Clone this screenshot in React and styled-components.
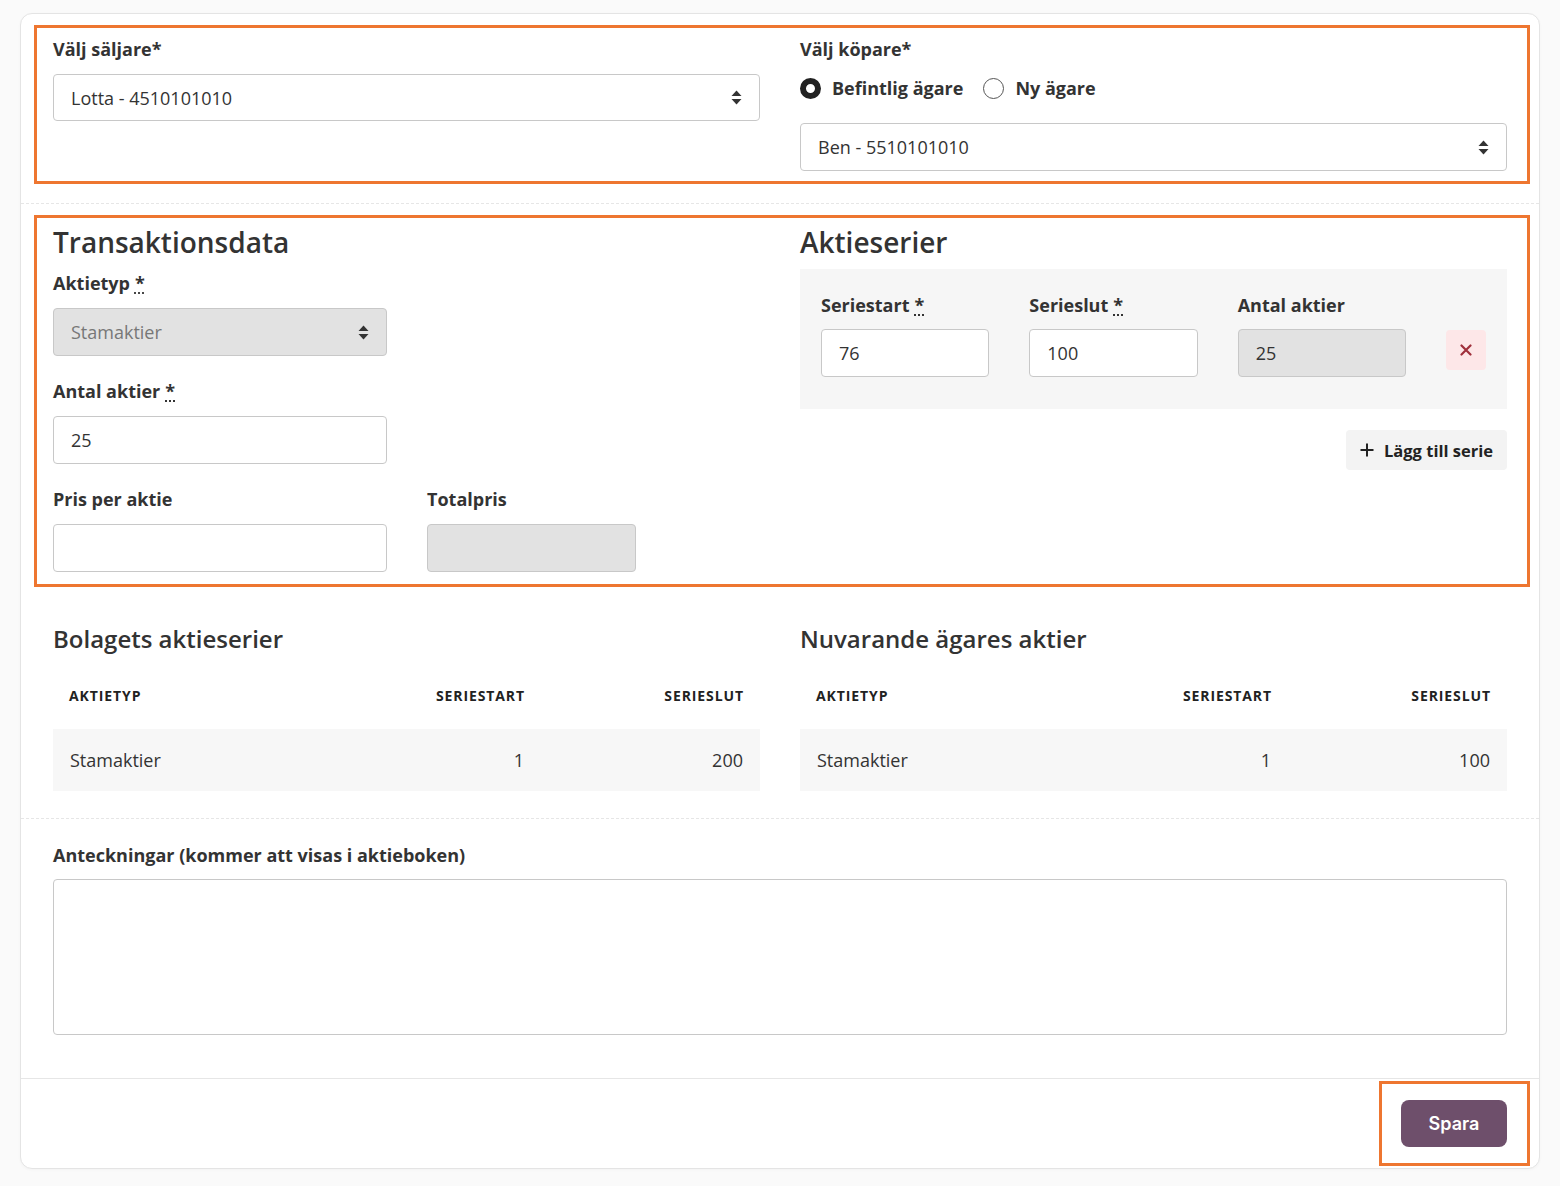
/*eslint-disable*/
import React from 'react';
import styled, { createGlobalStyle } from 'styled-components';

const GlobalStyle = createGlobalStyle`
  html, body {
    margin: 0;
    padding: 0;
    background: #fafafa;
  }
  body {
    font-family: "Open Sans", Lato, "Noto Sans", sans-serif;
    color: #333;
  }
  * { box-sizing: border-box; }
`

const Page = styled.div`
  padding: 13px 20px 16px 20px;
`

const Card = styled.div`
  background: #fff;
  border: 1px solid #e4e4e4;
  border-radius: 12px;
  box-shadow: 0 1px 3px rgba(0, 0, 0, 0.03);
  overflow: hidden;
`

// orange annotation frame
const Highlight = styled.div`
  border: 3px solid #ee7630;
  margin: ${p => p.$margin || '0 9px 0 13px'};
  padding: ${p => p.$padding || '8px 20px 10px 16px'};
`

const TwoCols = styled.div`
  display: grid;
  grid-template-columns: 1fr 1fr;
  column-gap: 40px;
  align-items: start;
`

const Divider = styled.hr`
  border: 0;
  border-top: 1px dashed #e6e6e6;
  margin: ${p => p.$margin || '0'};
`

const Label = styled.div`
  font-size: 18px;
  font-weight: 700;
  line-height: 27px;
  color: #333;
`

const Req = styled.abbr`
  text-decoration: underline dotted;
  text-underline-offset: 3px;
  margin-left: 5px;
`

const Field = styled.div`
  display: flex;
  flex-direction: column;
  gap: ${p => p.$gap || '11px'};
`

const SelectBox = styled.div`
  height: ${p => p.$h || 48}px;
  border: 1px solid #c8c8c8;
  border-radius: 4px;
  background: ${p => (p.$disabled ? '#e2e2e2' : '#fff')};
  color: ${p => (p.$disabled ? '#777' : '#333')};
  font-size: 18px;
  display: flex;
  align-items: center;
  justify-content: space-between;
  padding: 0 17px;
`

const Input = styled.div`
  height: 48px;
  border: 1px solid #c8c8c8;
  border-radius: 4px;
  background: ${p => (p.$disabled ? '#e2e2e2' : '#fff')};
  font-size: 18px;
  color: #333;
  display: flex;
  align-items: center;
  padding: 0 17px;
`

const RadioRow = styled.div`
  display: flex;
  align-items: center;
  gap: 20px;
  height: 26px;
  margin: 12px 0 22px;
`

const RadioItem = styled.label`
  display: flex;
  align-items: center;
  gap: 11px;
  font-size: 18px;
  font-weight: 700;
`

const RadioDot = styled.span`
  width: 21px;
  height: 21px;
  border-radius: 50%;
  border: ${p => (p.$checked ? '6px solid #222' : '1.5px solid #555')};
  background: #fff;
`

const Heading = styled.h2`
  margin: 0;
  font-size: 28px;
  font-weight: 600;
  line-height: 34px;
  color: #333;
`

const SubHeading = styled.h3`
  margin: 0;
  font-size: 24px;
  font-weight: 600;
  line-height: 29px;
  color: #333;
`

const LeftStack = styled.div`
  display: flex;
  flex-direction: column;
  gap: 22px;
  & > h2 { margin-bottom: -11px; }
`

const PriceRow = styled.div`
  display: grid;
  grid-template-columns: 334px 209px;
  column-gap: 40px;
`

const NarrowField = styled(Field)`
  width: 334px;
`

const SeriesBox = styled.div`
  margin-top: 10px;
  background: #f6f6f6;
  padding: 23px 21px 32px;
  display: grid;
  grid-template-columns: 1fr 1fr 1fr 40px;
  column-gap: 40px;
  align-items: end;
`

const DeleteButton = styled.button`
  width: 40px;
  height: 40px;
  border: 0;
  border-radius: 4px;
  background: #fde7e8;
  display: flex;
  align-items: center;
  justify-content: center;
  margin-bottom: 7px;
  padding: 0;
`

const Actions = styled.div`
  display: flex;
  justify-content: flex-end;
  margin-top: 21px;
`

const GhostButton = styled.button`
  height: 40px;
  border: 0;
  border-radius: 4px;
  background: #f3f3f3;
  font-family: inherit;
  font-size: 16.5px;
  font-weight: 700;
  color: #222;
  display: flex;
  align-items: center;
  gap: 10px;
  padding: 0 14px;
`

const TablesSection = styled.div`
  padding: 37px 32px 27px;
`

const Table = styled.table`
  width: 100%;
  border-collapse: collapse;
  margin-top: 19px;
  th {
    font-size: 14px;
    font-weight: 700;
    letter-spacing: 0.9px;
    text-transform: uppercase;
    color: #222;
    line-height: 18px;
    padding: 15px 16px 24px;
  }
  td {
    background: #f7f7f7;
    height: 62px;
    font-size: 18px;
    padding: 0 17px;
    color: #333;
  }
  th:first-child, td:first-child { text-align: left; }
  th:not(:first-child), td:not(:first-child) { text-align: right; }
`

const NotesSection = styled.div`
  padding: 23px 32px 43px;
`

const TextArea = styled.textarea`
  display: block;
  width: 100%;
  height: 156px;
  border: 1px solid #c8c8c8;
  border-radius: 4px;
  resize: none;
  font-family: inherit;
  font-size: 18px;
`

const Footer = styled.div`
  border-top: 1px solid #e6e6e6;
  padding: 2px 9px 2px 0;
  display: flex;
  justify-content: flex-end;
`

const SaveButton = styled.button`
  width: 106px;
  height: 47px;
  border: 0;
  border-radius: 8px;
  background: #6e4f6b;
  color: #fff;
  font-family: Inter, "Open Sans", sans-serif;
  font-size: 18px;
  font-weight: 600;
`

function SortIcon() {
  return (
    <svg width="11" height="15" viewBox="0 0 11 15">
      <path d="M5.5 0.5 L10.5 6 H0.5 Z" fill="#333" />
      <path d="M5.5 14.5 L10.5 9 H0.5 Z" fill="#333" />
    </svg>
  );
}

function CloseIcon() {
  return (
    <svg width="12" height="12" viewBox="0 0 12 12">
      <path d="M1.5 1.5 L10.5 10.5 M10.5 1.5 L1.5 10.5" stroke="#a0303c" strokeWidth="2.2" strokeLinecap="round" />
    </svg>
  );
}

function PlusIcon() {
  return (
    <svg width="14" height="14" viewBox="0 0 14 14">
      <path d="M7 0.5 V13.5 M0.5 7 H13.5" stroke="#222" strokeWidth="2" />
    </svg>
  );
}

function SeriesTable({ rows }) {
  return (
    <Table>
      <colgroup>
        <col />
        <col style={{ width: 200 }} />
        <col style={{ width: 219 }} />
      </colgroup>
      <thead>
        <tr>
          <th>Aktietyp</th>
          <th>Seriestart</th>
          <th>Serieslut</th>
        </tr>
      </thead>
      <tbody>
        {rows.map((r, i) => (
          <tr key={i}>
            <td>{r.type}</td>
            <td>{r.start}</td>
            <td>{r.end}</td>
          </tr>
        ))}
      </tbody>
    </Table>
  );
}

export default function App() {
  return (
    <>
      <GlobalStyle />
      <Page>
        <Card>
          <Highlight $margin="11px 9px 0 13px">
            <TwoCols>
              <Field>
                <Label>Välj säljare*</Label>
                <SelectBox $h={47}>
                  Lotta - 4510101010
                  <SortIcon />
                </SelectBox>
              </Field>
              <div>
                <Label>Välj köpare*</Label>
                <RadioRow>
                  <RadioItem><RadioDot $checked />Befintlig ägare</RadioItem>
                  <RadioItem><RadioDot />Ny ägare</RadioItem>
                </RadioRow>
                <SelectBox>
                  Ben - 5510101010
                  <SortIcon />
                </SelectBox>
              </div>
            </TwoCols>
          </Highlight>

          <Divider $margin="19px 0 11px" />

          <Highlight $padding="7px 20px 12px 16px">
            <TwoCols>
              <LeftStack>
                <Heading>Transaktionsdata</Heading>
                <NarrowField>
                  <Label>Aktietyp<Req title="obligatoriskt">*</Req></Label>
                  <SelectBox $disabled>
                    Stamaktier
                    <SortIcon />
                  </SelectBox>
                </NarrowField>
                <NarrowField>
                  <Label>Antal aktier<Req title="obligatoriskt">*</Req></Label>
                  <Input>25</Input>
                </NarrowField>
                <PriceRow>
                  <Field>
                    <Label>Pris per aktie</Label>
                    <Input />
                  </Field>
                  <Field>
                    <Label>Totalpris</Label>
                    <Input $disabled />
                  </Field>
                </PriceRow>
              </LeftStack>
              <div>
                <Heading>Aktieserier</Heading>
                <SeriesBox>
                  <Field $gap="10px">
                    <Label>Seriestart<Req title="obligatoriskt">*</Req></Label>
                    <Input>76</Input>
                  </Field>
                  <Field $gap="10px">
                    <Label>Serieslut<Req title="obligatoriskt">*</Req></Label>
                    <Input>100</Input>
                  </Field>
                  <Field $gap="10px">
                    <Label>Antal aktier</Label>
                    <Input $disabled>25</Input>
                  </Field>
                  <DeleteButton aria-label="Ta bort serie">
                    <CloseIcon />
                  </DeleteButton>
                </SeriesBox>
                <Actions>
                  <GhostButton>
                    <PlusIcon />
                    Lägg till serie
                  </GhostButton>
                </Actions>
              </div>
            </TwoCols>
          </Highlight>

          <TablesSection>
            <TwoCols>
              <div>
                <SubHeading>Bolagets aktieserier</SubHeading>
                <SeriesTable rows={[{ type: 'Stamaktier', start: 1, end: 200 }]} />
              </div>
              <div>
                <SubHeading>Nuvarande ägares aktier</SubHeading>
                <SeriesTable rows={[{ type: 'Stamaktier', start: 1, end: 100 }]} />
              </div>
            </TwoCols>
          </TablesSection>

          <Divider />

          <NotesSection>
            <Field $gap="10px">
              <Label>Anteckningar (kommer att visas i aktieboken)</Label>
              <TextArea />
            </Field>
          </NotesSection>

          <Footer>
            <Highlight $margin="0" $padding="16px 20px 16px 19px">
              <SaveButton>Spara</SaveButton>
            </Highlight>
          </Footer>
        </Card>
      </Page>
    </>
  );
}
